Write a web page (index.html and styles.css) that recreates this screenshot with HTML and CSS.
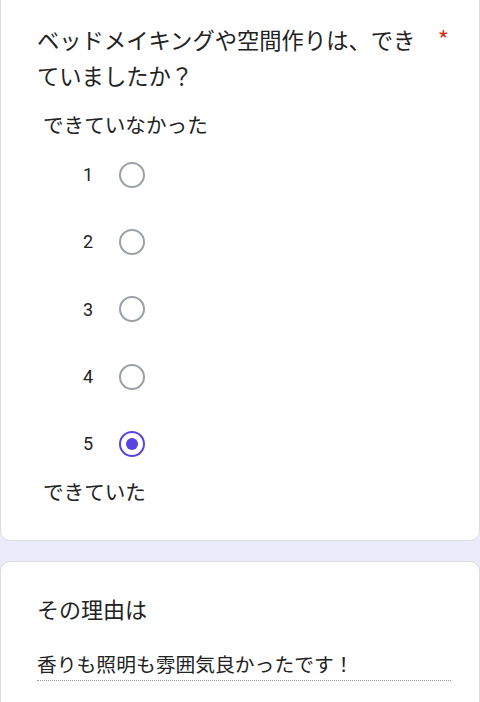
FILE: index.html
```html
<!DOCTYPE html>
<html lang="ja">
<head>
    <meta charset="UTF-8">
    <meta name="viewport" content="width=device-width, initial-scale=1.0">
    <title>アンケート</title>
    <link rel="stylesheet" href="styles.css">
</head>
<body>

    <div class="form">
        <div class="card first">
            <div class="question">
                <div class="question-title">ベッドメイキングや空間作りは、できていましたか？</div>
                <span class="required">*</span>
            </div>

            <div class="scale-label">できていなかった</div>
            <div class="scale">
                <div class="scale-row">
                    <span class="scale-num">1</span>
                    <span class="radio"></span>
                </div>
                <div class="scale-row">
                    <span class="scale-num">2</span>
                    <span class="radio"></span>
                </div>
                <div class="scale-row">
                    <span class="scale-num">3</span>
                    <span class="radio"></span>
                </div>
                <div class="scale-row">
                    <span class="scale-num">4</span>
                    <span class="radio"></span>
                </div>
                <div class="scale-row">
                    <span class="scale-num">5</span>
                    <span class="radio checked"></span>
                </div>
            </div>
            <div class="scale-label">できていた</div>
        </div>

        <div class="card">
            <div class="question-title short">その理由は</div>
            <div class="answer">香りも照明も雰囲気良かったです！</div>
        </div>
    </div>

</body>
</html>
```

FILE: styles.css
```css
body {
    margin: 0;
    background-color: #ecebfa;
    font-family: "Noto Sans CJK JP", "Noto Sans", sans-serif;
    color: #222;
    overflow: hidden;
}

.form {
    display: flex;
    flex-direction: column;
    gap: 20px;
}

.card {
    background-color: #fff;
    border: 1px solid #dadce0;
    border-radius: 10px;
    padding: 30px 30px 40px 36px;
}

.card.first {
    margin-top: -20px;
    padding-top: 40px;
    padding-bottom: 35px;
}

.question {
    display: flex;
    align-items: flex-start;
}

.question-title {
    width: 396px;
    font-size: 22.3px;
    line-height: 36px;
}

.question-title.short {
    font-size: 22px;
    line-height: 32px;
}

.required {
    color: #d93025;
    font-size: 24px;
    line-height: 36px;
    margin-left: 7px;
}

.scale-label {
    font-size: 20.6px;
    line-height: 28px;
    margin-top: 17px;
    padding-left: 6px;
}

.scale + .scale-label {
    margin-top: 0;
}

.scale {
    display: flex;
    flex-direction: column;
    margin-top: 3px;
}

.scale-row {
    display: flex;
    align-items: center;
    height: 67.3px;
    padding-left: 42px;
}

.scale-num {
    width: 18px;
    text-align: center;
    font-family: Roboto, "Noto Sans", sans-serif;
    font-size: 18px;
    margin-right: 22px;
}

.radio {
    width: 26px;
    height: 26px;
    box-sizing: border-box;
    border: 2.5px solid #9aa0a6;
    border-radius: 50%;
    display: flex;
    justify-content: center;
    align-items: center;
}

.radio.checked {
    border-color: #5644de;
}

.radio.checked::after {
    content: "";
    width: 12px;
    height: 12px;
    border-radius: 50%;
    background-color: #5644de;
}

.answer {
    margin-top: 26px;
    width: 414px;
    font-size: 19.8px;
    line-height: 28px;
    padding-bottom: 2px;
    border-bottom: 1px dotted #9aa0a6;
}
```
